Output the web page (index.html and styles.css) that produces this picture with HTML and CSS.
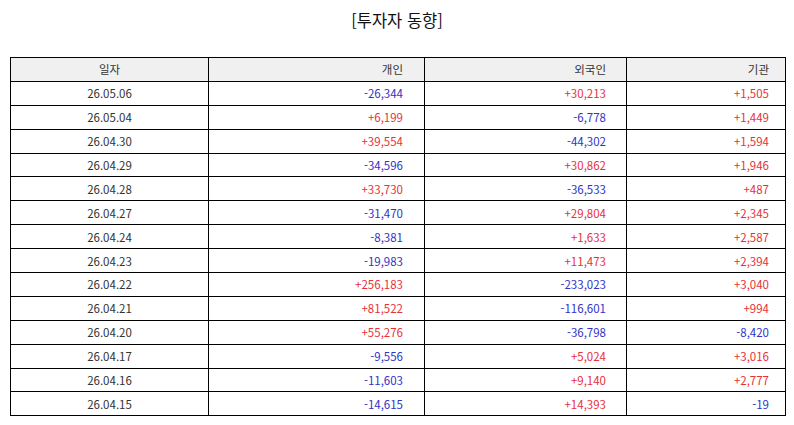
FILE: index.html
```html
<!DOCTYPE html>
<html lang="ko">
<head>
<meta charset="utf-8">
<link rel="stylesheet" href="styles.css">
</head>
<body>
<h1 class="title">[투자자 동향]</h1>
<table class="grid">
<thead>
<tr><th class="c-date">일자</th><th class="c-ind">개인</th><th class="c-for">외국인</th><th class="c-ins">기관</th></tr>
</thead>
<tbody>
<tr><td class="c-date">26.05.06</td><td class="c-ind neg">-26,344</td><td class="c-for pos">+30,213</td><td class="c-ins pos">+1,505</td></tr>
<tr><td class="c-date">26.05.04</td><td class="c-ind pos">+6,199</td><td class="c-for neg">-6,778</td><td class="c-ins pos">+1,449</td></tr>
<tr><td class="c-date">26.04.30</td><td class="c-ind pos">+39,554</td><td class="c-for neg">-44,302</td><td class="c-ins pos">+1,594</td></tr>
<tr><td class="c-date">26.04.29</td><td class="c-ind neg">-34,596</td><td class="c-for pos">+30,862</td><td class="c-ins pos">+1,946</td></tr>
<tr><td class="c-date">26.04.28</td><td class="c-ind pos">+33,730</td><td class="c-for neg">-36,533</td><td class="c-ins pos">+487</td></tr>
<tr><td class="c-date">26.04.27</td><td class="c-ind neg">-31,470</td><td class="c-for pos">+29,804</td><td class="c-ins pos">+2,345</td></tr>
<tr><td class="c-date">26.04.24</td><td class="c-ind neg">-8,381</td><td class="c-for pos">+1,633</td><td class="c-ins pos">+2,587</td></tr>
<tr><td class="c-date">26.04.23</td><td class="c-ind neg">-19,983</td><td class="c-for pos">+11,473</td><td class="c-ins pos">+2,394</td></tr>
<tr><td class="c-date">26.04.22</td><td class="c-ind pos">+256,183</td><td class="c-for neg">-233,023</td><td class="c-ins pos">+3,040</td></tr>
<tr><td class="c-date">26.04.21</td><td class="c-ind pos">+81,522</td><td class="c-for neg">-116,601</td><td class="c-ins pos">+994</td></tr>
<tr><td class="c-date">26.04.20</td><td class="c-ind pos">+55,276</td><td class="c-for neg">-36,798</td><td class="c-ins neg">-8,420</td></tr>
<tr><td class="c-date">26.04.17</td><td class="c-ind neg">-9,556</td><td class="c-for pos">+5,024</td><td class="c-ins pos">+3,016</td></tr>
<tr><td class="c-date">26.04.16</td><td class="c-ind neg">-11,603</td><td class="c-for pos">+9,140</td><td class="c-ins pos">+2,777</td></tr>
<tr><td class="c-date">26.04.15</td><td class="c-ind neg">-14,615</td><td class="c-for pos">+14,393</td><td class="c-ins neg">-19</td></tr>
</tbody>
</table>
</body>
</html>
```
FILE: styles.css
```css
html, body {
  margin: 0;
  padding: 0;
  background: #ffffff;
}
body {
  font-family: "Noto Sans CJK KR", "Noto Sans", sans-serif;
  color: #222;
}
.title {
  margin: 0;
  padding-top: 8px;
  height: 57px;
  box-sizing: border-box;
  text-align: center;
  font-size: 16.5px;
  font-weight: 400;
  line-height: 24px;
  color: #111;
}
.grid {
  margin-left: 10px;
  width: 775px;
  border-collapse: collapse;
  table-layout: fixed;
  font-size: 11.5px;
}
.grid tr {
  height: 23.9px;
}
.grid th, .grid td {
  box-sizing: border-box;
  border: 1px solid #000;
  padding: 0;
  line-height: 14px;
  font-weight: 400;
  color: #333;
}
.grid th {
  background: #f0f0f0;
}
.c-date { width: 198px; text-align: center; }
.c-ind { width: 216px; text-align: right; padding-right: 21px !important; }
.c-for { width: 202px; text-align: right; padding-right: 20px !important; }
.c-ins { width: 159px; text-align: right; padding-right: 16px !important; }
.grid td.pos { color: #e8303a; }
.grid td.neg { color: #3232c8; }
```
